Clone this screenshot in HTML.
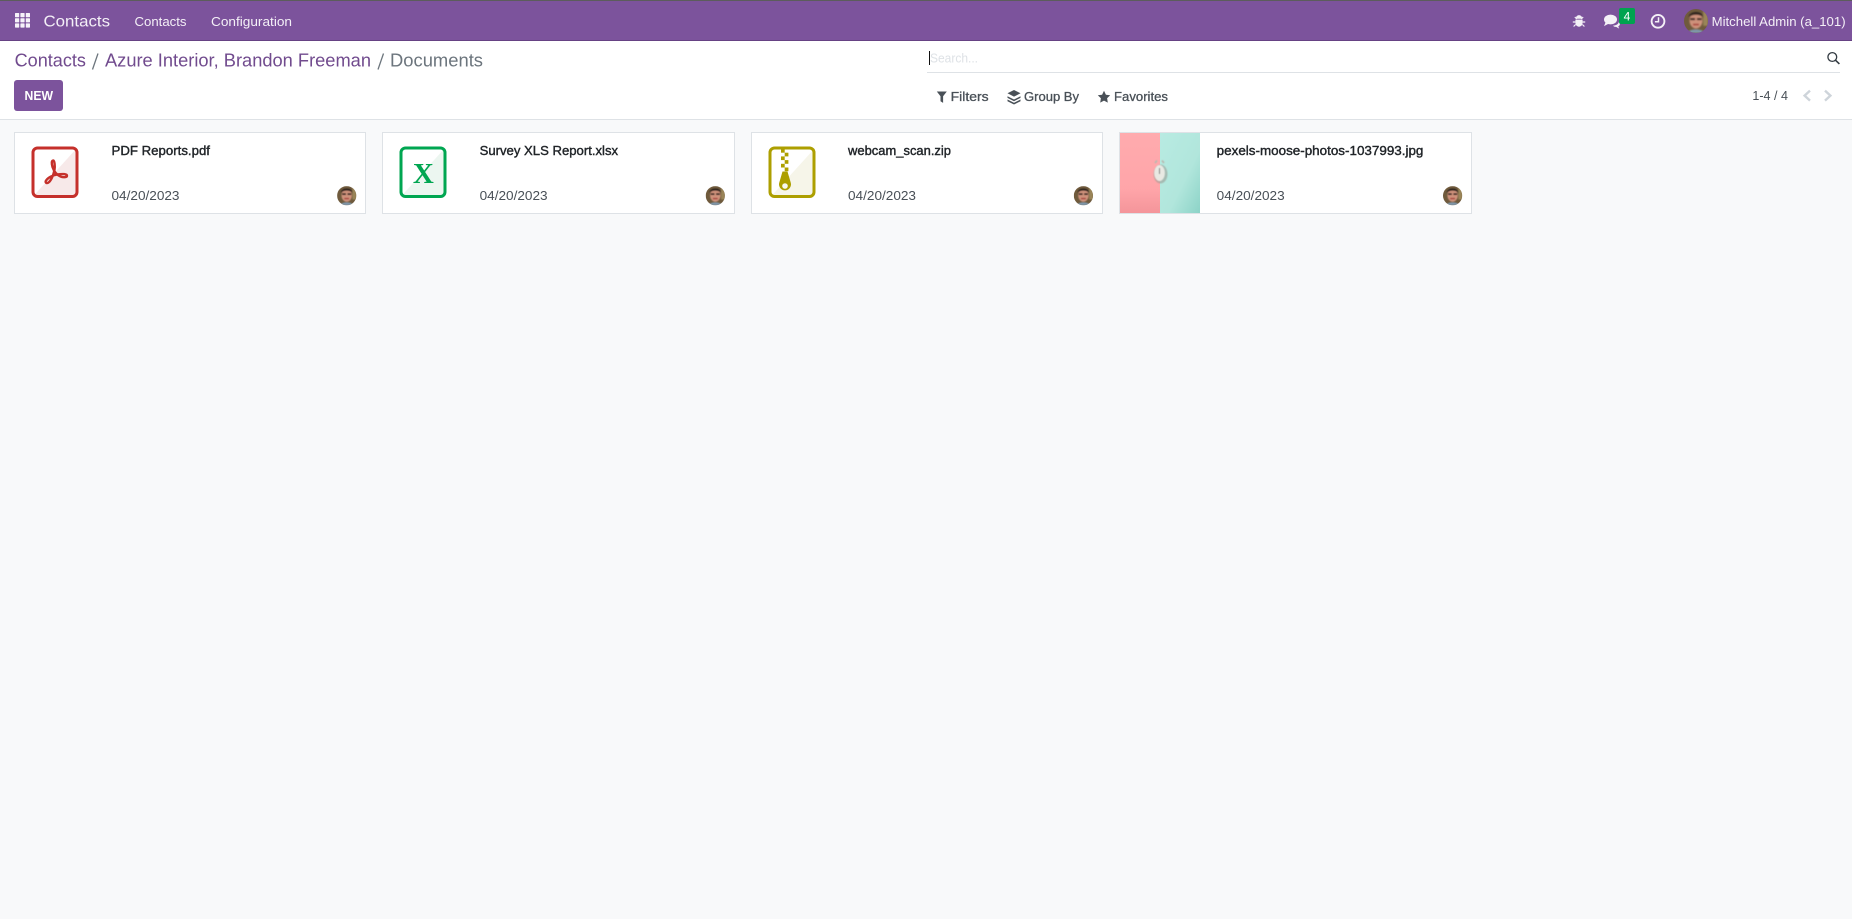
<!DOCTYPE html>
<html lang="en"><head><meta charset="utf-8"><title>Documents</title>
<style>
html,body{margin:0;padding:0;background:#f8f9fa;width:1852px;height:919px;overflow:hidden}
svg{display:block}
text{font-family:"Liberation Sans",sans-serif;white-space:pre}
.nav{fill:#f4f0f7;font-size:13px}
.bc{font-size:18px;fill:#714b8e}
.t{font-size:13px;fill:#212529;stroke:#212529;stroke-width:.4}
.d{font-size:13px;fill:#495057}
.f{font-size:13px;fill:#495057;stroke:#495057;stroke-width:.3}
</style></head><body>
<svg width="1852" height="919" viewBox="0 0 1852 919" xmlns="http://www.w3.org/2000/svg">
<defs>
<filter id="b1" x="-20%" y="-20%" width="140%" height="140%"><feGaussianBlur stdDeviation=".6"/></filter>
<linearGradient id="pink" x1="0" y1="0" x2="0" y2="1"><stop offset="0" stop-color="#ffabae"/><stop offset=".7" stop-color="#ffa5a9"/><stop offset="1" stop-color="#f4959a"/></linearGradient>
<linearGradient id="teal" x1="0" y1="0" x2="1" y2="1"><stop offset="0" stop-color="#b8ebe2"/><stop offset=".6" stop-color="#b1e6dc"/><stop offset="1" stop-color="#8cd3c7"/></linearGradient>
<clipPath id="av"><circle cx="0" cy="0" r="10"/></clipPath>
<g id="avatar"><g clip-path="url(#av)"><rect x="-10" y="-10" width="20" height="20" fill="#6f5a3c"/><g filter="url(#b1)"><path d="M6-10H10V4H6z" fill="#9a8558"/><ellipse cx="0" cy="-.5" rx="5.400" ry="6.800" fill="#cf927c"/><path d="M-6-3C-6-9 6-9 6-3C3-6-3-6-6-3z" fill="#2c211b"/><path d="M-4.800-1.600H-.8M.8-1.600H4.800" stroke="#33231f" stroke-width="1.800"/><path d="M-2.500 3H2.500" stroke="#a8423c" stroke-width="1.500"/><path d="M-7 10C-6 6 6 6 7 10z" fill="#7f97ab"/></g></g></g>
</defs>

<rect width="1852" height="919" fill="#f8f9fa"/>
<!-- navbar -->
<rect x="0" y="0" width="1852" height="41" fill="#7c539c"/>
<rect x="0" y="0" width="1852" height="1" fill="#5c5c5c"/>
<rect x="0" y="40" width="1852" height="1" fill="#664284"/>
<g fill="#f6f2f9">
<rect x="15" y="13" width="4.200" height="4.200" rx=".6"/><rect x="20.400" y="13" width="4.200" height="4.200" rx=".6"/><rect x="25.800" y="13" width="4.200" height="4.200" rx=".6"/>
<rect x="15" y="18.200" width="4.200" height="4.200" rx=".6"/><rect x="20.400" y="18.200" width="4.200" height="4.200" rx=".6"/><rect x="25.800" y="18.200" width="4.200" height="4.200" rx=".6"/>
<rect x="15" y="23.400" width="4.200" height="4.200" rx=".6"/><rect x="20.400" y="23.400" width="4.200" height="4.200" rx=".6"/><rect x="25.800" y="23.400" width="4.200" height="4.200" rx=".6"/>
</g>
<text x="43.500" y="26.500" font-size="16" fill="#f4f0f7" textLength="66.500" lengthAdjust="spacingAndGlyphs">Contacts</text>
<text class="nav" x="134.500" y="26" textLength="52" lengthAdjust="spacingAndGlyphs">Contacts</text>
<text class="nav" x="211" y="26" textLength="81" lengthAdjust="spacingAndGlyphs">Configuration</text>
<!-- systray -->
<g fill="#f4f0f7">
<path d="M1575.800 18.500a3.200 3.400 0 0 1 6.400 0v.3h-6.400z"/>
<path d="M1575.400 19.600h7.200v3.200c0 2.300-1.700 3.900-3.600 3.900s-3.600-1.600-3.600-3.900z"/>
<path d="M1574.800 17l2 2M1583.200 17l-2 2M1572.800 22h2.600M1585.200 22h-2.600M1573.600 26.500l2-2M1584.400 26.500l-2-2" stroke="#f4f0f7" stroke-width="1.200" fill="none"/>
<ellipse cx="1610.500" cy="19.500" rx="6.500" ry="4.900"/>
<path d="M1605.500 22.500l-1.500 3.600 4.500-2.400z"/>
<path d="M1613 25.600c3.400-.1 5.500-1.700 6-4 .9 1 1.200 2 .8 3.100-.3.8-.9 1.300-1.600 1.700l1 2.200-3.100-1.700c-1.200.1-2.200-.2-3.100-1.300z"/>
</g>
<rect x="1619" y="8" width="16" height="16" rx="2" fill="#00a34f"/>
<text x="1627" y="20.500" font-size="12" fill="#fff" text-anchor="middle">4</text>
<circle cx="1658" cy="21.300" r="6.400" fill="none" stroke="#f4f0f7" stroke-width="1.900"/>
<path d="M1658.500 17.300v4.400h-3.600" fill="none" stroke="#f4f0f7" stroke-width="1.500"/>
<use href="#avatar" transform="translate(1696 21) scale(1.200)"/>
<text class="nav" x="1711.600" y="26" textLength="134" lengthAdjust="spacingAndGlyphs">Mitchell Admin (a_101)</text>

<!-- control panel -->
<rect x="0" y="41" width="1852" height="78" fill="#fff"/>
<rect x="0" y="119" width="1852" height="1" fill="#dee2e6"/>
<text class="bc" x="14.600" y="66.700" textLength="71.400" lengthAdjust="spacingAndGlyphs">Contacts</text>
<path d="M98 53.500L92.500 69.500" stroke="#6c757d" stroke-width="1.300"/>
<text class="bc" x="105" y="66.700" textLength="266" lengthAdjust="spacingAndGlyphs">Azure Interior, Brandon Freeman</text>
<path d="M383.500 53.500L378 69.500" stroke="#6c757d" stroke-width="1.300"/>
<text x="390" y="66.700" font-size="18" fill="#6c757d" textLength="93" lengthAdjust="spacingAndGlyphs">Documents</text>
<rect x="14" y="80" width="49" height="31" rx="3" fill="#7c539c"/>
<text x="24.500" y="100" font-size="13" font-weight="bold" fill="#fff" textLength="28.500" lengthAdjust="spacingAndGlyphs">NEW</text>
<!-- search -->
<rect x="927" y="72" width="913" height="1" fill="#dee2e6"/>
<rect x="929" y="51" width="1" height="14" fill="#111"/>
<text x="930" y="62.300" font-size="13" fill="#dee2e6" textLength="48" lengthAdjust="spacingAndGlyphs">Search...</text>
<circle cx="1832.300" cy="57" r="4.400" fill="none" stroke="#333b42" stroke-width="1.300"/>
<path d="M1835.600 60.300l3.800 3.600" stroke="#333b42" stroke-width="1.600" fill="none"/>
<!-- filters -->
<path d="M936.800 91.500h10l-3.700 4.800v6.600l-2.600-1.700v-4.900z" fill="#495057"/>
<text class="f" x="950.600" y="101" textLength="38" lengthAdjust="spacingAndGlyphs">Filters</text>
<path d="M1014 90l6.500 3.300-6.500 3.300-6.500-3.300z" fill="#495057"/>
<path d="M1007.500 96.200l6.500 3.300 6.500-3.300v1.700l-6.500 3.300-6.500-3.300zM1007.500 99.500l6.500 3.300 6.500-3.300v1.700l-6.500 3.300-6.500-3.300z" fill="#495057"/>
<text class="f" x="1024" y="101" textLength="55" lengthAdjust="spacingAndGlyphs">Group By</text>
<path d="M1104 90.800l1.900 3.900 4.300.6-3.100 3 .7 4.300-3.800-2-3.800 2 .7-4.300-3.100-3 4.300-.6z" fill="#495057"/>
<text class="f" x="1114" y="101" textLength="54" lengthAdjust="spacingAndGlyphs">Favorites</text>
<text x="1752.400" y="100" font-size="13" fill="#495057" textLength="35.600" lengthAdjust="spacingAndGlyphs">1-4 / 4</text>
<path d="M1810 90.600l-5.400 5 5.400 5" fill="none" stroke="#ced4da" stroke-width="2.400"/>
<path d="M1825 90.600l5.400 5-5.400 5" fill="none" stroke="#ced4da" stroke-width="2.400"/>

<!-- cards -->
<g fill="#fff" stroke="#dee2e6">
<rect x="14.500" y="132.500" width="351" height="81"/>
<rect x="382.500" y="132.500" width="352" height="81"/>
<rect x="751.500" y="132.500" width="351" height="81"/>
<rect x="1119.500" y="132.500" width="352" height="81"/>
</g>

<!-- PDF icon -->
<path d="M77 148L33 196.500h41a3 3 0 0 0 3-3z" fill="#f7e9e9"/>
<rect x="33" y="148" width="44" height="48.500" rx="4.500" fill="none" stroke="#c5302b" stroke-width="3"/>
<path d="M53 160.500c-1.500.3-1.500 3-.5 6.500 1.500 4.500 4.500 8 8 9.500 2.500 1 6.500 1 6.500-.8 0-1.800-4.500-2-9.500-1.300-4.500.7-9.500 3-11.500 6.200-1 1.800.3 3 2 2.200 3-1.500 5.500-8 6.500-13 .6-3 .2-9.800-1.500-9.300z" fill="none" stroke="#c5302b" stroke-width="2.400"/>

<!-- XLSX icon -->
<path d="M445 148L401 196.500h41a3 3 0 0 0 3-3z" fill="#ecf6f0"/>
<rect x="401" y="148" width="44" height="48.500" rx="4.500" fill="none" stroke="#00a651" stroke-width="3"/>
<text x="423.300" y="183" font-size="29" font-weight="bold" fill="#00a651" text-anchor="middle" style="font-family:'Liberation Serif',serif">X</text>

<!-- ZIP icon -->
<path d="M815 148L771 196.500h41a3 3 0 0 0 3-3z" fill="#f6f5e9"/>
<rect x="770" y="148" width="44" height="48.500" rx="4.500" fill="none" stroke="#ad9f00" stroke-width="3"/>
<g fill="#ad9f00">
<rect x="781" y="149" width="3.700" height="3.700"/><rect x="784.700" y="152.700" width="3.700" height="3.700"/>
<rect x="781" y="156.400" width="3.700" height="3.700"/><rect x="784.700" y="160.100" width="3.700" height="3.700"/>
<rect x="781" y="163.800" width="3.700" height="3.700"/><rect x="784.700" y="167.500" width="3.700" height="3.700"/>
<path d="M782.500 171.500h5l3.200 11a6 6 0 1 1-11.400 0z"/>
</g>
<circle cx="785" cy="186" r="2.800" fill="#f8f8ee"/>

<!-- image thumb -->
<rect x="1120" y="133" width="40" height="80" fill="url(#pink)"/>
<rect x="1160" y="133" width="40" height="80" fill="url(#teal)"/>
<g filter="url(#b1)">
<ellipse cx="1160.500" cy="174" rx="7" ry="9.500" fill="#9d9c94" opacity=".6"/>
<ellipse cx="1159.500" cy="173" rx="5.300" ry="8" fill="#e9e9e3"/>
<path d="M1155 163l2-2.500M1164 163l-2-2.500" stroke="#b9b9b0" stroke-width="1.800"/>
<path d="M1159.500 168v6" stroke="#666" stroke-width=".9"/>
</g>

<!-- titles -->
<text class="t" x="111.500" y="155" textLength="98.500" lengthAdjust="spacingAndGlyphs">PDF Reports.pdf</text>
<text class="t" x="479.600" y="155" textLength="138.500" lengthAdjust="spacingAndGlyphs">Survey XLS Report.xlsx</text>
<text class="t" x="848" y="155" textLength="103" lengthAdjust="spacingAndGlyphs">webcam_scan.zip</text>
<text class="t" x="1216.700" y="155" textLength="206.700" lengthAdjust="spacingAndGlyphs">pexels-moose-photos-1037993.jpg</text>
<text class="d" x="111.500" y="200" textLength="68" lengthAdjust="spacingAndGlyphs">04/20/2023</text>
<text class="d" x="479.600" y="200" textLength="68" lengthAdjust="spacingAndGlyphs">04/20/2023</text>
<text class="d" x="848" y="200" textLength="68" lengthAdjust="spacingAndGlyphs">04/20/2023</text>
<text class="d" x="1216.700" y="200" textLength="68" lengthAdjust="spacingAndGlyphs">04/20/2023</text>
<use href="#avatar" transform="translate(346.700 195.700) scale(.96)"/>
<use href="#avatar" transform="translate(715.300 195.700) scale(.96)"/>
<use href="#avatar" transform="translate(1083.400 195.700) scale(.96)"/>
<use href="#avatar" transform="translate(1452.600 195.700) scale(.96)"/>
</svg>
</body></html>
